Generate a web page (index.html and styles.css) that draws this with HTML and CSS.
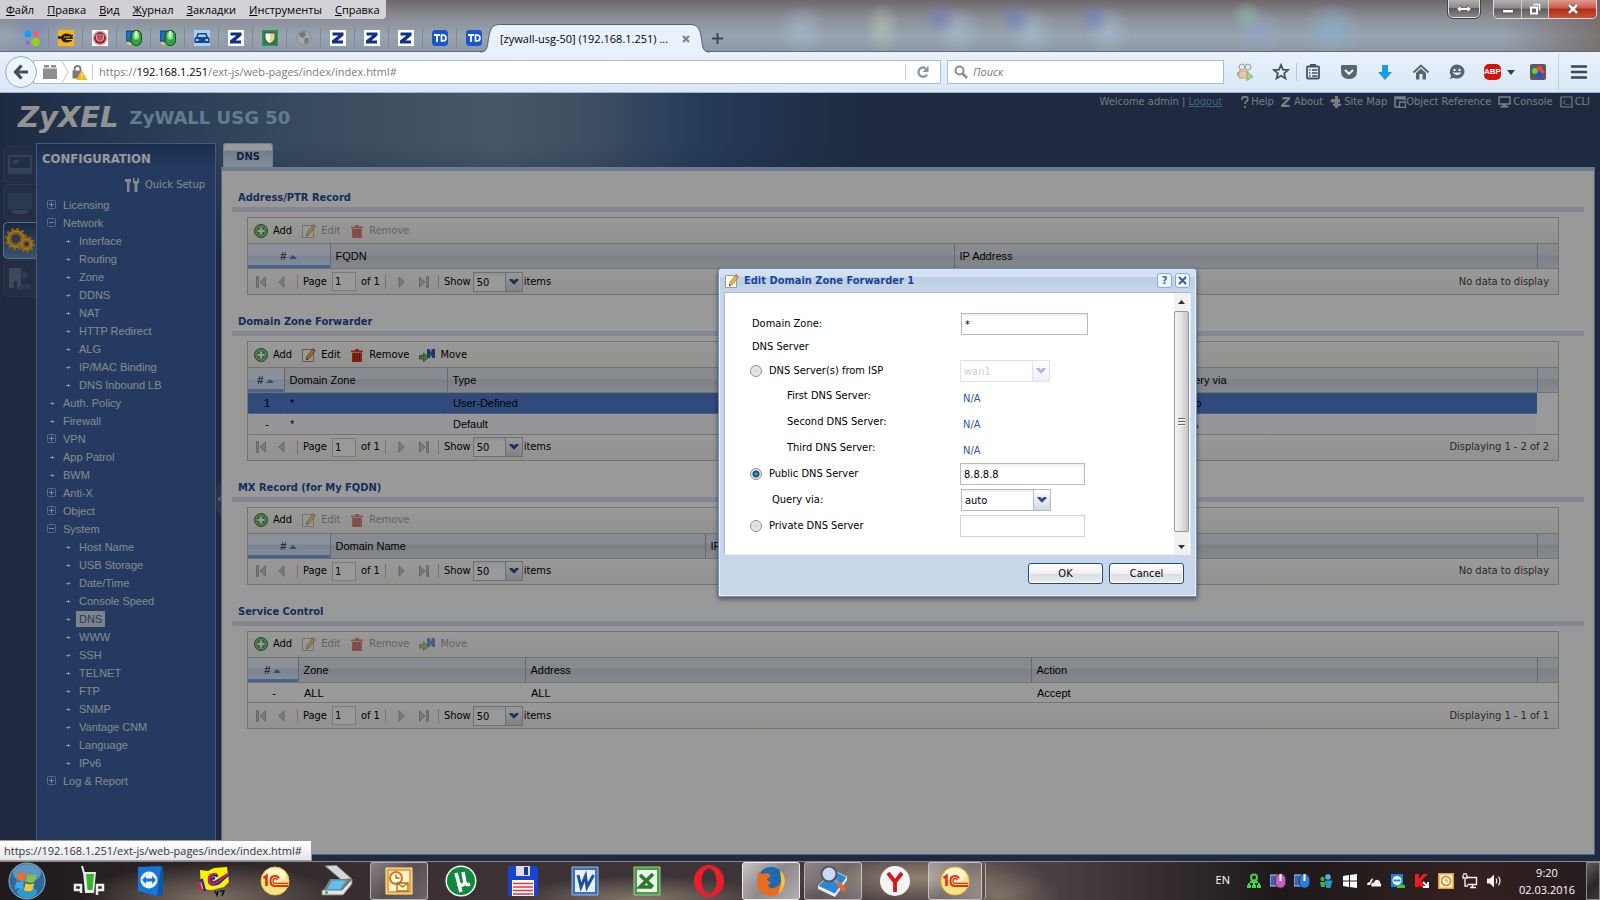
FILE: index.html
```html
<!DOCTYPE html>
<html lang="ru">
<head>
  <meta charset="UTF-8">
  <meta name="viewport" content="width=device-width, initial-scale=1.0">
  <title>[zywall-usg-50] (192.168.1.251)</title>
  <link rel="stylesheet" href="styles.css">
</head>
<body>

<!-- shared icons -->
<svg class="sprite" aria-hidden="true">
  <symbol id="i-add" viewBox="0 0 14 14"><circle cx="7" cy="7" r="6.5" fill="#5cae58" stroke="#3a7d3a"/><circle cx="7" cy="7" r="5.2" fill="none" stroke="#c5e6c0" stroke-width=".8"/><path d="M7 3.5v7M3.5 7h7" stroke="#fff" stroke-width="2.2"/></symbol>
  <symbol id="i-edit" viewBox="0 0 14 14"><path d="M.5 1.5h11v12H.5z" fill="#fff" stroke="#9a9a9a"/><path d="M11 .5l2.500 2-6 8-3.200 1.500.4-3.200z" fill="#f5b93c" stroke="#8f6322" stroke-width=".7"/><path d="M11 .5l2.500 2-1.300 1.600-2.500-2z" fill="#e57a6a"/><path d="M4.300 12l.3-1.700 1.200 1z" fill="#222"/></symbol>
  <symbol id="i-del" viewBox="0 0 14 14"><path d="M1 2.500h12v1.800H1zM5 1h4v1.500H5zM2 4.800h10V14H2z" fill="#d8442c"/><path d="M4.500 5.500v7.500M7 5.500v7.500M9.500 5.500v7.500" stroke="#8f2415"/></symbol>
  <symbol id="i-move" viewBox="0 0 16 14"><path d="M8 1h2.500l2 4V1H16v9h-2.500l-2.200-4v4H8z" fill="#2b62b8"/><path d="M.5 7.500h4V5l5 4.500-5 4v-2.500h-4z" fill="#7cba52" stroke="#37752c" stroke-width=".8"/></symbol>
  <symbol id="i-first" viewBox="0 0 11 12"><path d="M.5.5h2v11h-2zM9.500.8v10.400L4 6z" fill="#c2c2c2" stroke="#8c8c8c" stroke-width=".8"/></symbol>
  <symbol id="i-prev" viewBox="0 0 7 12"><path d="M6 .8v10.400L.8 6z" fill="#c2c2c2" stroke="#8c8c8c" stroke-width=".8"/></symbol>
  <symbol id="i-next" viewBox="0 0 7 12"><path d="M1 .8v10.400L6.200 6z" fill="#c2c2c2" stroke="#8c8c8c" stroke-width=".8"/></symbol>
  <symbol id="i-last" viewBox="0 0 11 12"><path d="M8.500.5h2v11h-2zM1.500.8v10.400L7 6z" fill="#c2c2c2" stroke="#8c8c8c" stroke-width=".8"/></symbol>
  <symbol id="i-chev" viewBox="0 0 10 6"><path d="M.5 0h2.800L5 1.800 6.700 0h2.800v1.200L5 5.800.5 1.200z" fill="#2d4f95"/></symbol>
  <symbol id="i-plus" viewBox="0 0 10 10"><rect x=".5" y=".5" width="8" height="8" rx="1" fill="none" stroke="#93b3d6"/><path d="M4.500 2v5M2 4.500h5" stroke="#d5dfeb"/></symbol>
  <symbol id="i-minus" viewBox="0 0 10 10"><rect x=".5" y=".5" width="8" height="8" rx="1" fill="none" stroke="#93b3d6"/><path d="M2 4.500h5" stroke="#d5dfeb"/></symbol>
  <symbol id="i-dot" viewBox="0 0 5 5"><path d="M0 2.500h4.500M2.500 1v3" stroke="#e3e9f0" stroke-width="1"/></symbol>
  <symbol id="i-z" viewBox="0 0 16 16"><path d="M0 0h16v16H0z" fill="#fff"/><path d="M2.500 2.500h11v3L7.500 10.500H13v3H2v-3l6.500-5h-6z" fill="#10308a"/></symbol>
  <symbol id="i-mouse" viewBox="0 0 16 16"><path d="M0 1h7v10H0z" fill="#1c6fc4" stroke="#1a2c50" stroke-width=".8"/><path d="M1 13l4 1.500" stroke="#ffd24a" stroke-width="1.600"/><rect x="5" y=".5" width="10.500" height="15" rx="5" fill="#2fa63a" stroke="#0d4d18"/><path d="M7.500 2.500v6q2.700 2.600 5.400 0v-6" fill="#8be08c"/><path d="M10.200 1v6" stroke="#fff" stroke-width="2"/></symbol>
  <symbol id="i-td" viewBox="0 0 16 16"><rect width="16" height="16" rx="3.500" fill="#1b56c8"/><path d="M2 5h6M5 5v7" stroke="#fff" stroke-width="1.800"/><path d="M9.500 5v6h1.500q3 0 3-3t-3-3z" fill="none" stroke="#fff" stroke-width="1.700"/></symbol>
  <symbol id="i-1c" viewBox="0 0 30 30"><circle cx="15" cy="15" r="14" fill="#fbe180" stroke="#e8c34e"/><ellipse cx="15" cy="9" rx="11" ry="7" fill="#fff6c8"/><path d="M3.500 12l3-2v10" fill="none" stroke="#e0301a" stroke-width="2.600"/><path d="M19 12.500q-1-2.500-4-2.500-4.500 0-4.500 5t4.500 5h13" fill="none" stroke="#e0301a" stroke-width="2"/><path d="M17.500 14q-.5-1.500-2.500-1.500-2 0-2 2.500t2 2.300h13" fill="none" stroke="#e0301a" stroke-width="1.300"/></symbol>
</svg>

<!-- browser window -->
<header class="titlebar">
  <div class="title-row">
    <nav class="menubar">
      <button type="button"><u>Ф</u>айл</button>
      <button type="button"><u>П</u>равка</button>
      <button type="button"><u>В</u>ид</button>
      <button type="button"><u>Ж</u>урнал</button>
      <button type="button"><u>З</u>акладки</button>
      <button type="button"><u>И</u>нструменты</button>
      <button type="button"><u>С</u>правка</button>
    </nav>
    <div class="win-buttons">
      <button type="button" class="wb wb-span" aria-label="span"><svg width="16" height="10" viewBox="0 0 16 10"><path d="M.7 5l4-4v2.500h6.600V1l4 4-4 4V6.500H4.700V9z" fill="#fff" stroke="#555" stroke-width=".8"/></svg></button>
      <div class="wb-group">
        <button type="button" class="wb wb-min" aria-label="minimize"><svg width="12" height="10"><path d="M.5 5.500h11v3.500H.5z" fill="#fff" stroke="#555"/></svg></button>
        <button type="button" class="wb wb-max" aria-label="restore"><svg width="12" height="12"><path d="M4.500 1.500h6v6" fill="none" stroke="#fff" stroke-width="1.500"/><path d="M2 4.500h6v6H2z" fill="none" stroke="#fff" stroke-width="2"/></svg></button>
        <button type="button" class="wb wb-close" aria-label="close"><svg width="12" height="10"><path d="M2 1l8 8M10 1L2 9" stroke="#6b3a34" stroke-width="4"/><path d="M2 1l8 8M10 1L2 9" stroke="#fff" stroke-width="2.500"/></svg></button>
      </div>
    </div>
  </div>

  <div class="tabs">
    <span class="pin"><svg width="16" height="16"><circle cx="4" cy="4" r="3.500" fill="#00a8f3"/><circle cx="12" cy="4" r="2.800" fill="#ff5b67"/><circle cx="3.500" cy="12.500" r="2" fill="#9b5bdc"/><circle cx="11.500" cy="12" r="4.300" fill="#94d01c"/></svg></span>
    <span class="pin"><svg width="16" height="16"><path d="M0 0h16v16H0z" fill="#f9b418"/><path d="M0 7.500h4" stroke="#222" stroke-width="2.500"/><ellipse cx="8.500" cy="8" rx="5.500" ry="4.500" fill="#222"/><path d="M8 5.500h7M8 8h7M9 10.500h5" stroke="#222" stroke-width="1.300"/><path d="M6 7h6M8 9.500h6" stroke="#f9b418" stroke-width="1"/></svg></span>
    <span class="pin"><svg width="16" height="16"><path d="M0 0h16v16H0z" fill="#fff"/><circle cx="8" cy="8" r="7.500" fill="#b9bcc2"/><circle cx="8" cy="8" r="6" fill="#b71c2b"/><path d="M4 5h8l-1 5q-3 2.500-6 0z" fill="#8c1220" stroke="#ddd" stroke-width=".8"/><path d="M6 6v4M8 6v4.500M10 6v4" stroke="#e6c9cc" stroke-width=".8"/></svg></span>
    <span class="pin"><svg width="16" height="16"><use href="#i-mouse"/></svg></span>
    <span class="pin"><svg width="16" height="16"><use href="#i-mouse"/></svg></span>
    <span class="pin"><svg width="16" height="16"><path d="M0 0h16v16H0z" fill="#a9cff5"/><path d="M3.500 3h9l1.500 4 1.500 1v5h-15V8L2 7z" fill="#15498f"/><path d="M4.700 4.500h6.600l.9 2.500H3.800z" fill="#a9cff5"/><path d="M2 10h2.500M11.500 10H14" stroke="#fff" stroke-width="1.500"/></svg></span>
    <span class="pin"><svg width="16" height="16"><use href="#i-z"/></svg></span>
    <span class="pin"><svg width="16" height="16"><path d="M.8.8h14.400v14.400H.8z" fill="#3a6b55" stroke="#1f9a45" stroke-width="1.600"/><path d="M3.500 3.500H8v9.500q-4.500-2-4.500-6z" fill="#fff"/><path d="M8 3.500h4.500V7q0 4-4.500 6z" fill="#e9d58c"/></svg></span>
    <span class="pin"><svg width="16" height="16"><circle cx="8" cy="8" r="7" fill="#a5a9ae" stroke="#83878c"/><path d="M3 4q3-3 6-2l1 3-3 3-3-1zM9 8h4l-1 5-3 1-1-3z" fill="#74787d"/></svg></span>
    <span class="pin"><svg width="16" height="16"><use href="#i-z"/></svg></span>
    <span class="pin"><svg width="16" height="16"><use href="#i-z"/></svg></span>
    <span class="pin"><svg width="16" height="16"><use href="#i-z"/></svg></span>
    <span class="pin"><svg width="16" height="16"><use href="#i-td"/></svg></span>
    <span class="pin"><svg width="16" height="16"><use href="#i-td"/></svg></span>
    <div class="tab-active">
      <svg width="20" height="29"><path d="M0 28.500C9 28.500 7 20 9 12 10.500 4 13 .5 20 .5V29H0z" fill="#e9f1fb"/><path d="M0 28C9 28 7 20 9 12 10.500 4 13 .5 20 .5" fill="none" stroke="#566073"/></svg>
      <div class="tab-mid">
        <span>[zywall-usg-50] (192.168.1.251) ...</span>
        <button type="button" aria-label="close tab"><svg width="8" height="8"><path d="M1 1l6 6M7 1L1 7" stroke="#7b8794" stroke-width="2.200"/></svg></button>
      </div>
      <svg width="20" height="29"><path d="M20 28.500C11 28.500 13 20 11 12 9.500 4 7 .5 0 .5V29H20z" fill="#e9f1fb"/><path d="M20 28C11 28 13 20 11 12 9.500 4 7 .5 0 .5" fill="none" stroke="#566073"/></svg>
    </div>
    <button type="button" class="tab-new" aria-label="new tab"><svg width="11" height="11"><path d="M5.500 0v11M0 5.500h11" stroke="#404b57" stroke-width="2"/></svg></button>
  </div>
</header>

<div class="navbar">
  <button type="button" class="back" aria-label="back"><svg width="16" height="16"><path d="M8.500 1.500L2.500 8l6 6.500M3 8h12" fill="none" stroke="#40505f" stroke-width="3.200"/></svg></button>
  <div class="urlbox">
    <svg width="16" height="14"><path d="M1 3.500h14V14H1zM2 0h5v2.500H2zM9 0h5v2.500H9z" fill="#8d8d8d"/></svg>
    <svg width="8" height="22"><path d="M1 0l6 11-6 11" fill="none" stroke="#c5c5c5"/></svg>
    <svg width="16" height="15"><path d="M2.500 6V4q0-3 3-3t3 3v2" fill="none" stroke="#7b7b7b" stroke-width="1.800"/><rect x=".5" y="5.500" width="9.500" height="8" fill="#7b7b7b"/><path d="M9.500 5L15.500 15H4z" fill="#fbb415"/><path d="M9.700 8v3.500M9.700 12.500v1.300" stroke="#fff" stroke-width="1.300"/></svg>
    <span class="vline"></span>
    <div class="url">https://<b>192.168.1.251</b>/ext-js/web-pages/index/index.html#</div>
    <span class="vline"></span>
    <button type="button" class="reload" aria-label="reload"><svg width="14" height="14"><path d="M11 9.500A4.600 4.600 0 1 1 9.500 3.200" fill="none" stroke="#8796a5" stroke-width="2.300"/><path d="M12.500.5v6.500H6.500z" fill="#8796a5"/></svg></button>
  </div>
  <label class="searchbox">
    <svg width="14" height="14"><circle cx="5.500" cy="5.500" r="4" fill="none" stroke="#8b8b8b" stroke-width="2"/><path d="M8.500 8.500l4.500 4.500" stroke="#8b8b8b" stroke-width="2.500"/></svg>
    <input type="text" placeholder="Поиск" aria-label="Поиск">
  </label>
  <div class="nav-icons">
    <button type="button" aria-label="video"><svg width="18" height="18"><circle cx="6" cy="4" r="3" fill="#e3e7ea" stroke="#98a1a8"/><circle cx="12" cy="4" r="3" fill="#e3e7ea" stroke="#98a1a8"/><path d="M3 8h9v7H3z" fill="#ecc79a" stroke="#b5a48e"/><path d="M1 9h2v4H1z" fill="#a3a9ae"/><path d="M11 9l6 4.500-6 4z" fill="#9ad79a" stroke="#78b878"/></svg></button>
    <button type="button" aria-label="bookmark" class="star"><svg width="18" height="18"><path d="M9 2l2 4.700 5 .4-3.800 3.300 1.200 5L9 12.800l-4.400 2.600 1.200-5L2 7.100l5-.4z" fill="none" stroke="#47525f" stroke-width="1.800"/></svg></button>
    <button type="button" aria-label="list"><svg width="18" height="18"><rect x="3" y="3.500" width="12" height="12" rx="1" fill="none" stroke="#47525f" stroke-width="1.800"/><path d="M6 1h6v3H6z" fill="#47525f"/><path d="M5 7h1.500M8 7h5.500M5 10h1.500M8 10h5.500M5 13h1.500M8 13h5.500" stroke="#47525f" stroke-width="1.500"/></svg></button>
    <button type="button" aria-label="pocket"><svg width="18" height="18"><path d="M2 2h14l1 1v5q0 8-8 8T1 8V3z" fill="#5a6470"/><path d="M5 7l4 3.800L13 7" fill="none" stroke="#eef4fb" stroke-width="2"/></svg></button>
    <button type="button" aria-label="downloads"><svg width="18" height="18"><path d="M6 2h6v7h4l-7 8-7-8h4z" fill="#1d9be0"/></svg></button>
    <button type="button" aria-label="home"><svg width="18" height="18"><path d="M1.500 9.500L9 2.500l7.500 7" fill="none" stroke="#5a6470" stroke-width="2"/><path d="M4 10l5-4.500L14 10v6.500h-3.500V11h-3v5.500H4z" fill="#5a6470"/></svg></button>
    <button type="button" aria-label="chat"><svg width="18" height="18"><path d="M9 1.500a7.500 7 0 1 1-3.500 13.200L1.500 16l1.700-3A7.300 7.300 0 0 1 9 1.500z" fill="#5a6470"/><circle cx="6.500" cy="7" r="1.200" fill="#eef4fb"/><circle cx="11.500" cy="7" r="1.200" fill="#eef4fb"/><path d="M4.500 9.500q4.500 5 9 0z" fill="#eef4fb"/></svg></button>
    <button type="button" class="abp">
      <span>ABP</span>
      <svg width="8" height="5"><path d="M0 0h8L4 5z" fill="#333c47"/></svg>
    </button>
    <button type="button" aria-label="addon"><svg width="18" height="18"><rect x="1" y="1" width="16" height="16" rx="2" fill="#5b5b5b"/><circle cx="6" cy="8" r="3" fill="#5ad53f"/><circle cx="10.500" cy="5" r="2.600" fill="#f2413f"/><circle cx="13" cy="8.500" r="2.300" fill="#e84848"/><circle cx="10.500" cy="12" r="3" fill="#2b48f0"/></svg></button>
    <span class="vline tall"></span>
    <button type="button" aria-label="menu"><svg width="18" height="18"><path d="M2 3.500h14M2 9h14M2 14.500h14" stroke="#3c4754" stroke-width="2.600" stroke-linecap="round"/></svg></button>
  </div>
</div>

<!-- router web interface -->
<main class="app">
  <div class="app-head">
    <div class="logo">ZyXEL</div>
    <div class="model">ZyWALL USG 50</div>
    <div class="links">
      <span>Welcome admin | <a href="#" class="logout">Logout</a></span>
      <a href="#"><svg width="8" height="12"><path d="M1.200 4V2q0-1 1.200-1h3q1.200 0 1.200 1v2q0 1-1.300 1.500Q4 6 4 8M4 10v2" fill="none" stroke="#cfd2d8" stroke-width="1.800"/></svg>Help</a>
      <a href="#"><svg width="9" height="10" class="gap"><path d="M1.500 1.200h7L1 8.800h7.500" fill="none" stroke="#cfd2d8" stroke-width="2.200"/></svg>About</a>
      <a href="#"><svg width="12" height="12"><path d="M5 0h3v12H5zM0 5l2-2h8v3.500H2zM3 7.500h7l1.500 1.300L10 10H3z" fill="#cfd2d8"/></svg>Site Map</a>
      <a href="#" class="tight"><svg width="12" height="12"><path d="M1 11.500V1h10v3.500M1 11h4" fill="none" stroke="#cfd2d8" stroke-width="1.600"/><path d="M5.500 6h6v5.500h-6z" fill="none" stroke="#cfd2d8" stroke-width="1.400"/><path d="M1 1h10v2.500H1z" fill="#cfd2d8"/></svg>Object Reference</a>
      <a href="#"><svg width="13" height="12"><path d="M1 1h11v7H1z" fill="none" stroke="#cfd2d8" stroke-width="1.500"/><path d="M4.500 8h4v2h2v1.500H2.500V10h2z" fill="#cfd2d8"/></svg>Console</a>
      <a href="#"><svg width="13" height="12"><path d="M1 1h11v10H1z" fill="none" stroke="#cfd2d8" stroke-width="1.200"/><path d="M5.500 4.500L3.500 6.500l2 2M6.500 8.500h1M8.500 8.500h1" fill="none" stroke="#cfd2d8"/></svg>CLI</a>
    </div>
  </div>

  <div class="app-main">
    <div class="rail">
      <div class="rail-item"><svg width="26" height="26"><path d="M1 3h24v19H1z" fill="#5a6d90"/><path d="M3 5h20v11H3z" fill="#384d77"/><path d="M6 8h7l-3 4H6z" fill="#5a6d90"/></svg></div>
      <div class="rail-item"><svg width="26" height="26"><path d="M1 3h24v16H1z" fill="#4a5f87"/><path d="M4 20h18l-3 4H7z" fill="#5a6d90"/></svg></div>
      <div class="rail-item on">
        <svg width="30" height="28">
          <g fill="none" stroke="#e9a21e"><circle cx="11" cy="12" r="7" stroke-width="4.500"/><circle cx="11" cy="12" r="10" stroke-width="2.500" stroke-dasharray="2.600 2.640"/></g>
          <circle cx="11" cy="12" r="8" fill="none" stroke="#ffdf73" stroke-width="1"/>
          <g fill="none" stroke="#e9a21e"><circle cx="21.500" cy="17" r="4.500" stroke-width="4.500" fill="#3b5680"/><circle cx="21.500" cy="17" r="7.300" stroke-width="2" stroke-dasharray="2.300 2.290"/></g>
          <circle cx="21.500" cy="17" r="5" fill="none" stroke="#ffdf73"/>
        </svg>
      </div>
      <div class="rail-item"><svg width="26" height="26"><path d="M2 2h12v20h-4v-7H7v7H2z" fill="#66789a"/><circle cx="17" cy="9" r="4" fill="#4d628a"/><path d="M10 24q4-10 14-5v4z" fill="#4d628a"/></svg></div>
    </div>

    <aside class="sidebar">
      <h1>CONFIGURATION</h1>
      <a href="#" class="quick">
        <svg width="15" height="14"><path d="M0 1h6v3H4.500V14h-2.500V4H0z" fill="#dfe4ea"/><path d="M8 0v4q0 1.500 1.500 2V14h3V6Q14 5.500 14 4V0l-1.500 0v3h-3V0z" fill="#dfe4ea"/></svg>
        Quick Setup
      </a>
      <ul class="tree">
        <li><svg><use href="#i-plus"/></svg><a href="#">Licensing</a></li>
        <li><svg><use href="#i-minus"/></svg><a href="#">Network</a></li>
        <li class="sub"><svg><use href="#i-dot"/></svg><a href="#">Interface</a></li>
        <li class="sub"><svg><use href="#i-dot"/></svg><a href="#">Routing</a></li>
        <li class="sub"><svg><use href="#i-dot"/></svg><a href="#">Zone</a></li>
        <li class="sub"><svg><use href="#i-dot"/></svg><a href="#">DDNS</a></li>
        <li class="sub"><svg><use href="#i-dot"/></svg><a href="#">NAT</a></li>
        <li class="sub"><svg><use href="#i-dot"/></svg><a href="#">HTTP Redirect</a></li>
        <li class="sub"><svg><use href="#i-dot"/></svg><a href="#">ALG</a></li>
        <li class="sub"><svg><use href="#i-dot"/></svg><a href="#">IP/MAC Binding</a></li>
        <li class="sub"><svg><use href="#i-dot"/></svg><a href="#">DNS Inbound LB</a></li>
        <li class="leaf"><svg><use href="#i-dot"/></svg><a href="#">Auth. Policy</a></li>
        <li class="leaf"><svg><use href="#i-dot"/></svg><a href="#">Firewall</a></li>
        <li><svg><use href="#i-plus"/></svg><a href="#">VPN</a></li>
        <li class="leaf"><svg><use href="#i-dot"/></svg><a href="#">App Patrol</a></li>
        <li class="leaf"><svg><use href="#i-dot"/></svg><a href="#">BWM</a></li>
        <li><svg><use href="#i-plus"/></svg><a href="#">Anti-X</a></li>
        <li><svg><use href="#i-plus"/></svg><a href="#">Object</a></li>
        <li><svg><use href="#i-minus"/></svg><a href="#">System</a></li>
        <li class="sub"><svg><use href="#i-dot"/></svg><a href="#">Host Name</a></li>
        <li class="sub"><svg><use href="#i-dot"/></svg><a href="#">USB Storage</a></li>
        <li class="sub"><svg><use href="#i-dot"/></svg><a href="#">Date/Time</a></li>
        <li class="sub"><svg><use href="#i-dot"/></svg><a href="#">Console Speed</a></li>
        <li class="sub"><svg><use href="#i-dot"/></svg><a href="#" class="current">DNS</a></li>
        <li class="sub"><svg><use href="#i-dot"/></svg><a href="#">WWW</a></li>
        <li class="sub"><svg><use href="#i-dot"/></svg><a href="#">SSH</a></li>
        <li class="sub"><svg><use href="#i-dot"/></svg><a href="#">TELNET</a></li>
        <li class="sub"><svg><use href="#i-dot"/></svg><a href="#">FTP</a></li>
        <li class="sub"><svg><use href="#i-dot"/></svg><a href="#">SNMP</a></li>
        <li class="sub"><svg><use href="#i-dot"/></svg><a href="#">Vantage CNM</a></li>
        <li class="sub"><svg><use href="#i-dot"/></svg><a href="#">Language</a></li>
        <li class="sub"><svg><use href="#i-dot"/></svg><a href="#">IPv6</a></li>
        <li><svg><use href="#i-plus"/></svg><a href="#">Log &amp; Report</a></li>
      </ul>
    </aside>

    <div class="splitter"><svg width="5" height="34"><path d="M5 0v34L0 28V6z" fill="#46577b"/><path d="M4.500 14v6L1.500 17z" fill="#93a3c0"/></svg></div>

    <section class="content">
      <a href="#" class="page-tab">DNS</a>
      <div class="panel">

        <section class="block">
          <h2>Address/PTR Record</h2>
          <div class="grid">
            <div class="toolbar">
              <button type="button"><svg><use href="#i-add"/></svg>Add</button>
              <button type="button" disabled><svg><use href="#i-edit"/></svg>Edit</button>
              <button type="button" disabled><svg><use href="#i-del"/></svg>Remove</button>
            </div>
            <table>
              <colgroup><col class="w-num-l"><col class="w-fqdn"><col><col class="w-end"></colgroup>
              <tr><th class="sorted"># <i></i></th><th>FQDN</th><th>IP Address</th><th></th></tr>
            </table>
            <div class="pager">
              <button type="button" class="p-first" aria-label="first"><svg width="11" height="12"><use href="#i-first"/></svg></button>
              <button type="button" class="p-prev" aria-label="prev"><svg width="7" height="12"><use href="#i-prev"/></svg></button>
              <span class="sep"></span>
              <label>Page <input type="text" value="1"></label>
              <span class="of">of 1</span>
              <span class="sep"></span>
              <button type="button" class="p-next" aria-label="next"><svg width="7" height="12"><use href="#i-next"/></svg></button>
              <button type="button" class="p-last" aria-label="last"><svg width="11" height="12"><use href="#i-last"/></svg></button>
              <span class="sep"></span>
              <label for="show1">Show</label>
              <span class="combo small"><select id="show1"><option>50</option></select><span class="arrow"><svg width="10" height="6"><use href="#i-chev"/></svg></span></span>
              <span>items</span>
              <span class="total">No data to display</span>
            </div>
          </div>
        </section>

        <section class="block">
          <h2>Domain Zone Forwarder</h2>
          <div class="grid">
            <div class="toolbar">
              <button type="button"><svg><use href="#i-add"/></svg>Add</button>
              <button type="button"><svg><use href="#i-edit"/></svg>Edit</button>
              <button type="button"><svg><use href="#i-del"/></svg>Remove</button>
              <button type="button"><svg class="mv"><use href="#i-move"/></svg>Move</button>
            </div>
            <table>
              <colgroup><col class="w-num-s"><col class="w-zone"><col class="w-type"><col><col class="w-end"></colgroup>
              <tr><th class="sorted"># <i></i></th><th>Domain Zone</th><th>Type</th><th>Query via</th><th></th></tr>
              <tr class="selected"><td class="num">1</td><td>*</td><td>User-Defined</td><td>auto</td><td class="blank"></td></tr>
              <tr class="alt"><td class="num">-</td><td>*</td><td>Default</td><td>N/A</td><td class="blank"></td></tr>
            </table>
            <div class="pager">
              <button type="button" class="p-first" aria-label="first"><svg width="11" height="12"><use href="#i-first"/></svg></button>
              <button type="button" class="p-prev" aria-label="prev"><svg width="7" height="12"><use href="#i-prev"/></svg></button>
              <span class="sep"></span>
              <label>Page <input type="text" value="1"></label>
              <span class="of">of 1</span>
              <span class="sep"></span>
              <button type="button" class="p-next" aria-label="next"><svg width="7" height="12"><use href="#i-next"/></svg></button>
              <button type="button" class="p-last" aria-label="last"><svg width="11" height="12"><use href="#i-last"/></svg></button>
              <span class="sep"></span>
              <label for="show2">Show</label>
              <span class="combo small"><select id="show2"><option>50</option></select><span class="arrow"><svg width="10" height="6"><use href="#i-chev"/></svg></span></span>
              <span>items</span>
              <span class="total">Displaying 1 - 2 of 2</span>
            </div>
          </div>
        </section>

        <section class="block">
          <h2>MX Record (for My FQDN)</h2>
          <div class="grid">
            <div class="toolbar">
              <button type="button"><svg><use href="#i-add"/></svg>Add</button>
              <button type="button" disabled><svg><use href="#i-edit"/></svg>Edit</button>
              <button type="button" disabled><svg><use href="#i-del"/></svg>Remove</button>
            </div>
            <table>
              <colgroup><col class="w-num-l"><col class="w-name"><col><col class="w-end"></colgroup>
              <tr><th class="sorted"># <i></i></th><th>Domain Name</th><th>IP/FQDN</th><th></th></tr>
            </table>
            <div class="pager">
              <button type="button" class="p-first" aria-label="first"><svg width="11" height="12"><use href="#i-first"/></svg></button>
              <button type="button" class="p-prev" aria-label="prev"><svg width="7" height="12"><use href="#i-prev"/></svg></button>
              <span class="sep"></span>
              <label>Page <input type="text" value="1"></label>
              <span class="of">of 1</span>
              <span class="sep"></span>
              <button type="button" class="p-next" aria-label="next"><svg width="7" height="12"><use href="#i-next"/></svg></button>
              <button type="button" class="p-last" aria-label="last"><svg width="11" height="12"><use href="#i-last"/></svg></button>
              <span class="sep"></span>
              <label for="show3">Show</label>
              <span class="combo small"><select id="show3"><option>50</option></select><span class="arrow"><svg width="10" height="6"><use href="#i-chev"/></svg></span></span>
              <span>items</span>
              <span class="total">No data to display</span>
            </div>
          </div>
        </section>

        <section class="block">
          <h2>Service Control</h2>
          <div class="grid">
            <div class="toolbar">
              <button type="button"><svg><use href="#i-add"/></svg>Add</button>
              <button type="button" disabled><svg><use href="#i-edit"/></svg>Edit</button>
              <button type="button" disabled><svg><use href="#i-del"/></svg>Remove</button>
              <button type="button" disabled><svg class="mv"><use href="#i-move"/></svg>Move</button>
            </div>
            <table>
              <colgroup><col class="w-num-m"><col class="w-svc"><col class="w-addr"><col><col class="w-end"></colgroup>
              <tr><th class="sorted"># <i></i></th><th>Zone</th><th>Address</th><th>Action</th><th></th></tr>
              <tr><td class="num">-</td><td>ALL</td><td>ALL</td><td>Accept</td><td class="blank"></td></tr>
            </table>
            <div class="pager">
              <button type="button" class="p-first" aria-label="first"><svg width="11" height="12"><use href="#i-first"/></svg></button>
              <button type="button" class="p-prev" aria-label="prev"><svg width="7" height="12"><use href="#i-prev"/></svg></button>
              <span class="sep"></span>
              <label>Page <input type="text" value="1"></label>
              <span class="of">of 1</span>
              <span class="sep"></span>
              <button type="button" class="p-next" aria-label="next"><svg width="7" height="12"><use href="#i-next"/></svg></button>
              <button type="button" class="p-last" aria-label="last"><svg width="11" height="12"><use href="#i-last"/></svg></button>
              <span class="sep"></span>
              <label for="show4">Show</label>
              <span class="combo small"><select id="show4"><option>50</option></select><span class="arrow"><svg width="10" height="6"><use href="#i-chev"/></svg></span></span>
              <span>items</span>
              <span class="total">Displaying 1 - 1 of 1</span>
            </div>
          </div>
        </section>

      </div>
    </section>
  </div>

  <div class="mask"></div>

  <!-- edit window -->
  <div class="dialog" role="dialog" aria-labelledby="dlgTitle">
    <div class="dlg-head">
      <svg width="14" height="14"><use href="#i-edit"/></svg>
      <h3 id="dlgTitle">Edit Domain Zone Forwarder 1</h3>
      <button type="button" class="dlg-tool" aria-label="help">?</button>
      <button type="button" class="dlg-tool" aria-label="close"><svg width="9" height="9"><path d="M1 1l7 7M8 1L1 8" stroke="#2c56a8" stroke-width="1.800"/></svg></button>
    </div>
    <div class="dlg-body">
      <form class="form">
        <div class="row first"><label for="zone">Domain Zone:</label><input type="text" id="zone" class="text wide" value="*"></div>
        <div class="row short"><span>DNS Server</span></div>
        <div class="row isp radio"><label><input type="radio" name="srv">DNS Server(s) from ISP</label><span class="combo off"><select disabled aria-label="ISP interface"><option>wan1</option></select><span class="arrow"><svg width="10" height="6"><use href="#i-chev"/></svg></span></span></div>
        <div class="row deep"><span>First DNS Server:</span><span class="val">N/A</span></div>
        <div class="row deep"><span>Second DNS Server:</span><span class="val">N/A</span></div>
        <div class="row deep"><span>Third DNS Server:</span><span class="val">N/A</span></div>
        <div class="row radio"><label><input type="radio" name="srv" checked>Public DNS Server</label><input type="text" class="text" value="8.8.8.8" aria-label="Public DNS Server"></div>
        <div class="row mid"><label for="via">Query via:</label><span class="combo"><select id="via"><option>auto</option></select><span class="arrow"><svg width="10" height="6"><use href="#i-chev"/></svg></span></span></div>
        <div class="row radio"><label><input type="radio" name="srv">Private DNS Server</label><input type="text" class="text" disabled aria-label="Private DNS Server"></div>
      </form>
      <div class="scroll">
        <svg width="7" height="4"><path d="M0 4l3.500-4L7 4z" fill="#333"/></svg>
        <div class="thumb"><i></i><i></i><i></i></div>
        <svg width="7" height="4"><path d="M0 0l3.500 4L7 0z" fill="#333"/></svg>
      </div>
    </div>
    <div class="dlg-foot">
      <button type="button">OK</button>
      <button type="button">Cancel</button>
    </div>
  </div>

  <div class="status">https://192.168.1.251/ext-js/web-pages/index/index.html#</div>
</main>

<!-- taskbar -->
<footer class="taskbar">
  <button type="button" class="start" aria-label="start"><svg width="38" height="38"><circle cx="19" cy="19" r="18" fill="#2c6a9c" stroke="#8fb9d6"/><ellipse cx="19" cy="11" rx="14" ry="9" fill="#7fb4d8" opacity=".6"/><ellipse cx="19" cy="30" rx="10" ry="6" fill="#35b8ee" opacity=".6"/><path d="M10 12q4-2.500 8-.5l-1.500 7.500q-3.500-2-8 0z" fill="#ef6a2d"/><path d="M19.500 12q4 2.500 9 0l-1.700 7.500q-4 2.500-8.800 0z" fill="#8ac43f"/><path d="M8 20.500q4-2.500 8-.3L14.500 27q-3.500-2-8 .5z" fill="#45a5e6"/><path d="M17.500 21q4 2.500 8.800 0L24.500 28q-4 2.500-8.500.3z" fill="#fbc52b"/></svg></button>
  <button type="button" class="task" aria-label="qip"><svg width="32" height="32"><path d="M9 1l2 7" stroke="#eee" stroke-width="2"/><path d="M10 7h13l-2 21h-9z" fill="#e9e9e9"/><path d="M13 9h8l-1.500 16h-5z" fill="#35b52c"/><path d="M8 28v-8H2v5h6M24 30V20h6v5h-6" fill="none" stroke="#eee" stroke-width="2.500"/></svg></button>
  <button type="button" class="task" aria-label="teamviewer"><svg width="32" height="32"><path d="M3 2l23-1v26l-4 4-19-5z" fill="#1477d8"/><path d="M26 1l2 2v27l-6 1" fill="#0d57a8"/><circle cx="14" cy="15" r="8.500" fill="#e9f4ff"/><path d="M7 15l4-4v2.500h6V11l4 4-4 4v-2.500h-6V19z" fill="#1477d8"/></svg></button>
  <button type="button" class="task" aria-label="1c7"><svg width="34" height="32"><path d="M4 5l8 1 6-3 13-1 2 15-5 5-12 3-11-1z" fill="#fff200"/><path d="M2 17l4-2 3 11M22 11q-9-3-9 4t10 3l11-10M19 13q-4 0-4 3t6 0l13-8" fill="none" stroke="#1926c9" stroke-width="2.500"/><path d="M1 18l2-1 3 9M21 9q-9-1-8 6t10 1l10-8" fill="none" stroke="#e5202a" stroke-width="2"/><path d="M19 26l2 4 1-4M24 26h4l-2 5" fill="none" stroke="#111" stroke-width="1.500"/></svg></button>
  <button type="button" class="task" aria-label="1c"><svg width="30" height="30"><use href="#i-1c"/></svg></button>
  <button type="button" class="task" aria-label="scanner"><svg width="34" height="32"><path d="M5 1l11-1 16 14-8 3z" fill="#d5d8db" stroke="#777"/><path d="M10 14h15l6-1-9 13H3z" fill="#7b7f84"/><path d="M12 15.500h14l-6 9H7z" fill="#58c4f3"/><path d="M2 25h20l10-11v5l-9 11H2z" fill="#e2e5e7" stroke="#777"/><path d="M5 27.500h3" stroke="#3c9c3c" stroke-width="2"/></svg></button>
  <button type="button" class="task open" aria-label="outlook"><svg width="28" height="30"><path d="M1 2h26v26H1z" fill="#f2a434" stroke="#fff0c9"/><path d="M4 5h20v20H4z" fill="#fff3d6"/><circle cx="11" cy="12" r="6" fill="#fff8e5" stroke="#c97c19" stroke-width="2"/><path d="M11 8.500V12h3.500M12 17h11v8H12zM12 17l5.500 4 5.500-4" fill="none" stroke="#b56d16" stroke-width="1.400"/></svg></button>
  <button type="button" class="task" aria-label="utorrent"><svg width="32" height="32"><circle cx="16" cy="16" r="15.500" fill="#fff"/><circle cx="16" cy="16" r="14" fill="#10893e"/><path d="M11 8l3 11q3 3 6-1L18 7M20 17q1 4 5 2" fill="none" stroke="#fff" stroke-width="3.500"/><path d="M13.500 18l2.500 9" stroke="#fff" stroke-width="3.500"/></svg></button>
  <button type="button" class="task" aria-label="floppy"><svg width="32" height="32"><path d="M1 1h28l2 2v28H1z" fill="#1745cf"/><path d="M9 1h14v10H9z" fill="#dadfe6"/><path d="M17 2h4v8h-4z" fill="#1a3788"/><path d="M5 15h22v16H5z" fill="#fff"/><path d="M6 18.500h20M6 22h20M6 25.500h20M6 29h20" stroke="#e03444" stroke-width="1.300"/></svg></button>
  <button type="button" class="task" aria-label="word"><svg width="28" height="30"><path d="M1 1h26v28H1z" fill="#3c70bd" stroke="#9bb9e3"/><path d="M4 4h20v22H4z" fill="#e8f0fa"/><path d="M7 9l3 12 4.500-11 1.500 11L22.500 9" fill="none" stroke="#1f4f9f" stroke-width="3"/></svg></button>
  <button type="button" class="task" aria-label="excel"><svg width="28" height="30"><path d="M1 1h26v28H1z" fill="#4b9a45" stroke="#9acb90"/><path d="M4 4h20v22H4z" fill="#edf6ea"/><path d="M7 9l13 12M20 8L7 21h12" fill="none" stroke="#2d7a2b" stroke-width="3.500"/></svg></button>
  <button type="button" class="task" aria-label="opera"><svg width="32" height="32"><path fill-rule="evenodd" d="M16 0a15 16 0 1 0 0 32 15 16 0 1 0 0-32zM16 3.500a7.500 12.500 0 1 1 0 25 7.500 12.500 0 1 1 0-25z" fill="#ea1f29"/></svg></button>
  <button type="button" class="task focus" aria-label="firefox"><svg width="32" height="32"><circle cx="16" cy="15.500" r="13.500" fill="#1c6bb0"/><path d="M25 5q7 7 4 16-4 10-14 10-9-1-12-8-2-8 1-17l3 3q3-1 6-1l3 3-4 3q1 3 4 3l-3 4q2 3 6 2 6-2 7-7 1-6-1-11z" fill="#ea6b1e"/><path d="M25 5q7 7 4 16-2 5-6 8 4-9 3-15z" fill="#fbc236"/></svg></button>
  <button type="button" class="task open" aria-label="search"><svg width="34" height="32"><path d="M2 21L18 6l13 6-12 17z" fill="#2b87cf" stroke="#b7dcf4"/><path d="M2 21l17 8 12-17v3L19 32 2 24z" fill="#e6eef4"/><circle cx="13" cy="9" r="7.500" fill="#c9d9f3" stroke="#556" stroke-width="2"/><path d="M19 15l3 3" stroke="#99a" stroke-width="3"/><path d="M22 18l7 8" stroke="#e26a2c" stroke-width="4.500"/></svg></button>
  <button type="button" class="task" aria-label="yandex"><svg width="30" height="30"><circle cx="15" cy="15" r="15" fill="#f4f4f4"/><path d="M8 7l7 9v10M22 7l-7 9" fill="none" stroke="#d61516" stroke-width="3.800"/></svg></button>
  <button type="button" class="task open stack" aria-label="1c open"><svg width="30" height="30"><use href="#i-1c"/></svg></button>

  <div class="tray">
    <span class="lang">EN</span>
    <svg width="16" height="16"><path d="M8 1.500a3 3 0 1 1 0 6 3 3 0 0 1 0-6M4 9h8M3 14v-4M13 14v-4M8 8v6" fill="none" stroke="#41d64b" stroke-width="2"/><path d="M1 12h4v3H1zM6 12h4v3H6zM11 12h4v3h-4z" fill="#41d64b"/></svg>
    <svg width="16" height="16"><path d="M0 2h8v11H0z" fill="#3c63a8" stroke="#bcd"/><rect x="5.500" y="1" width="10" height="14" rx="5" fill="#c75fb8" stroke="#6b2468"/><path d="M10.500 1v7" stroke="#fff" stroke-width="2"/></svg>
    <svg width="16" height="16"><path d="M0 2h8v11H0z" fill="#3c63a8" stroke="#bcd"/><rect x="5.500" y="1" width="10" height="14" rx="5" fill="#2f7fd8" stroke="#123a80"/><path d="M10.500 1v7" stroke="#fff" stroke-width="2"/></svg>
    <svg width="16" height="16"><circle cx="4.500" cy="6" r="2.200" fill="#3eae49"/><path d="M2 9h5v5H3z" fill="#3eae49"/><circle cx="10" cy="4" r="2.800" fill="#4bb5dc"/><path d="M6.500 7.500h8L12.500 15h-4z" fill="#2d94c4"/></svg>
    <svg width="16" height="16"><path d="M1 3l6-1v5.500H1zM8 2l7-1v6.500H8zM1 8.500h6V14l-6-1zM8 8.500h7V15l-7-1z" fill="#fff"/></svg>
    <svg width="16" height="16"><path d="M1 12q0-3 3-3 0-3.500 3.500-3.500L4 12zM5.500 13.500q-1-4 2.500-4 1-4 5-2 1.500 1 1.200 2.500Q16 11 15 13.500z" fill="#f2f2f2"/></svg>
    <svg width="16" height="16"><path d="M1 1h12v13H1z" fill="#1684e0"/><circle cx="7" cy="7.500" r="4.500" fill="#fff"/><path d="M3.500 7.500h7" stroke="#1684e0" stroke-width="2"/><path d="M7 12h8v3H7z" fill="#45c32d"/></svg>
    <svg width="16" height="16"><path d="M1 1h4v5l4-5h5L7 8l4 6H7L5 11v3H1z" fill="#ee1c25"/><path d="M9 9l5 5M14 9v5H9" stroke="#fff" stroke-width="1.800" fill="none"/></svg>
    <svg width="16" height="16"><path d="M.8.800h14.400v14.400H.8z" fill="#fff2d5" stroke="#ef9d2e" stroke-width="1.600"/><circle cx="8" cy="8" r="4.500" fill="none" stroke="#cf8120" stroke-width="1.500"/><path d="M8 5.500V8h2" fill="none" stroke="#cf8120"/></svg>
    <svg width="16" height="16"><path d="M5.500 4.500h9v7h-9M8 14.500h6M10.500 12v2M3 6v7h3M1 2v3h4V2M2 0v2M4 0v2" fill="none" stroke="#f2f2f2" stroke-width="1.400"/></svg>
    <svg width="16" height="16"><path d="M1 5.500h3l4-4v13l-4-4H1z" fill="#f2f2f2"/><path d="M10 5.500q1.500 2.500 0 5M12.500 3.500q3 4.500 0 9" fill="none" stroke="#f2f2f2" stroke-width="1.200"/></svg>
    <div class="clock"><span>9:20</span><span>02.03.2016</span></div>
    <button type="button" class="show-desktop" aria-label="desktop"></button>
  </div>
</footer>

</body>
</html>
```

FILE: styles.css
```css
* { box-sizing: border-box; }
body {
  margin: 0;
  min-height: 100vh;
  display: flex;
  flex-direction: column;
  font: 11px/14px "DejaVu Sans Condensed", Tahoma, sans-serif;
  color: #000;
  overflow: hidden;
}
button { font: inherit; color: inherit; padding: 0; margin: 0; border: 0; background: none; }
input, select { font: inherit; color: inherit; margin: 0; border-radius: 0; }
svg { display: block; flex: none; }
a { color: inherit; text-decoration: none; }
.sprite { position: absolute; width: 0; height: 0; }

/* ---- browser ---- */
.titlebar, .navbar, .status { font: 11px/16px "Open Sans", "Noto Sans", sans-serif; }
.titlebar {
  height: 52px;
  display: flex;
  flex-direction: column;
  justify-content: space-between;
  border-bottom: 1px solid #5f697a;
  background:
    radial-gradient(ellipse 26px 26px at 802px 30px, rgba(165,190,210,.6), transparent),
    radial-gradient(ellipse 18px 26px at 882px 28px, rgba(190,200,180,.6), transparent),
    radial-gradient(ellipse 16px 16px at 940px 18px, rgba(115,130,190,.7), transparent),
    radial-gradient(ellipse 24px 26px at 958px 32px, rgba(165,185,205,.7), transparent),
    radial-gradient(ellipse 16px 16px at 1016px 18px, rgba(115,130,190,.7), transparent),
    radial-gradient(ellipse 24px 26px at 1032px 32px, rgba(165,185,205,.7), transparent),
    radial-gradient(ellipse 16px 16px at 1094px 18px, rgba(115,130,190,.7), transparent),
    radial-gradient(ellipse 24px 26px at 1108px 32px, rgba(165,185,205,.7), transparent),
    radial-gradient(ellipse 16px 16px at 1246px 16px, rgba(140,185,160,.7), transparent),
    radial-gradient(ellipse 24px 26px at 1258px 32px, rgba(145,165,205,.7), transparent),
    radial-gradient(ellipse 32px 28px at 1332px 30px, rgba(140,175,205,.8), transparent),
    radial-gradient(ellipse 30px 40px at 35px 30px, rgba(110,130,185,.5), transparent),
    linear-gradient(90deg, transparent 94%, rgba(110,95,90,.7)),
    linear-gradient(#6e676b, #8b8e97 35%, #98a4b0 70%, #8e98a4);
}
.title-row { display: flex; justify-content: space-between; align-items: flex-start; height: 19px; }
.menubar {
  display: flex;
  gap: 13px;
  height: 19px;
  padding: 0 6px;
  background: linear-gradient(90deg, #cfcfd4, #d3d3d8);
  border-bottom-right-radius: 4px;
}
.win-buttons { display: flex; gap: 13px; padding-right: 3px; }
.wb { display: flex; align-items: center; justify-content: center; height: 18px; background: linear-gradient(#b3aeb0, #8d8889 45%, #5e5a5b 50%, #8b8788); }
.wb-span { width: 32px; border: 1px solid #ddd; border-top: 0; border-radius: 0 0 5px 5px; outline: 1px solid #444; }
.wb-group { display: flex; border: 1px solid #ddd; border-top: 0; border-radius: 0 0 5px 5px; overflow: hidden; }
.wb-min { width: 28px; border-right: 1px solid #ccc; }
.wb-max { width: 27px; border-right: 1px solid #ccc; }
.wb-close { width: 47px; background: linear-gradient(#dc9c92, #cd5a48 45%, #b02d17 50%, #c9523a); }

.tabs { display: flex; height: 28px; padding-left: 15px; margin-bottom: -1px; }
.pin { width: 34px; display: flex; align-items: center; justify-content: center; border-right: 1px solid #808a97; height: 21px; margin-top: 3px; }
.pin:nth-child(14) { border-color: transparent; }
.tab-active { display: flex; margin-left: -11px; height: 29px; position: relative; }
.tab-mid { display: flex; align-items: center; justify-content: space-between; width: 190px; padding-bottom: 1px; background: #e9f1fb; border-top: 1px solid #566073; white-space: nowrap; }
.tab-new { display: flex; align-items: center; padding: 0 2px; }

.navbar { height: 41px; display: flex; align-items: center; background: linear-gradient(#e9f1fb, #d9e7f6); border-bottom: 1px solid #a3b5c9; }
.back { width: 32px; height: 32px; margin-left: 5px; border: 1px solid #96acc6; border-radius: 50%; background: #eef4fb; display: flex; align-items: center; justify-content: center; position: relative; z-index: 1; }
.urlbox { flex: 1; display: flex; align-items: center; height: 24px; margin-left: -4px; padding-left: 8px; background: #fff; border: 1px solid #a9bdd4; }
.urlbox svg + svg { margin-left: 3px; }
.urlbox svg + .vline { margin-left: 4px; }
.vline { width: 1px; height: 16px; margin: 0 6px 0 5px; background: #c9ced5; }
.url { flex: 1; color: #7b7b7b; }
.url b { font-weight: normal; color: #000; }
.reload { padding: 0 10px 0 4px; }
.searchbox { width: 277px; height: 24px; margin-left: 6px; display: flex; align-items: center; gap: 5px; padding-left: 6px; background: #fff; border: 1px solid #a9bdd4; }
.searchbox input { flex: 1; min-width: 0; border: 0; padding: 0; font-style: italic; background: none; outline: 0; }
.searchbox input::placeholder { color: #777; }
.nav-icons { display: flex; align-items: center; gap: 18px; padding: 0 12px; }
.nav-icons .star { padding-right: 6px; border-right: 1px solid #bcc7d3; margin-right: -11px; }
.abp { display: flex; align-items: center; gap: 6px; margin-right: -4px; }
.abp span { width: 17px; height: 16px; border-radius: 5px; background: #d0140f; color: #fff; font: bold 8px/16px "Liberation Sans", Arial, sans-serif; }
.vline.tall { height: 38px; margin: 0 -7px; }

/* ---- router page ---- */
.app {
  flex: 1;
  position: relative;
  display: flex;
  flex-direction: column;
  background:
    linear-gradient(rgba(52,70,107,0) 50px, #34466b 165px),
    linear-gradient(90deg, #34466b, #3a5c87 6%, #557699 16%, #7a90ac 31%, #6683a5 37%, #3d6393 44%, #34466b 54%);
}
.app-head { height: 50px; display: flex; padding: 0 10px 0 18px; }
.logo { font: italic bold 29px/48px "DejaVu Sans", sans-serif; color: #f4f4f4; }
.model { margin-left: 11px; font: bold 18px/50px "DejaVu Sans", sans-serif; color: #9fd3e8; }
.links { margin-left: auto; display: flex; gap: 7px; height: 18px; align-items: center; color: #c8ced8; }
.links span { margin-right: 12px; }
.links a { display: flex; align-items: center; gap: 2px; }
.links .logout { display: inline; color: #6fa6e0; text-decoration: underline; }
.links .gap { margin-right: 2px; }
.links .tight { gap: 0; }

.app-main { flex: 1; display: flex; padding: 0 5px 6px 3px; }
.rail { width: 33px; padding-top: 3px; display: flex; flex-direction: column; gap: 1px; }
.rail-item { height: 37px; display: flex; align-items: center; justify-content: center; background: #3b4d73; border: 1px solid #465a82; border-right: 0; border-radius: 5px 0 0 5px; }
.rail-item.on { background: linear-gradient(#28436c, #6589bb); border-color: #9dbce0; }

.sidebar { width: 180px; background: linear-gradient(#2d4d80, #3c62a0 24px); border: 1px solid #7296c4; border-bottom: 0; font: 11px/18px "Liberation Sans", Arial, sans-serif; color: #dfe4ea; }
.sidebar h1 { margin: 0; padding-left: 5px; font: bold 13px/30px "DejaVu Sans Condensed", Tahoma, sans-serif; color: #fff; }
.quick { display: flex; justify-content: flex-end; align-items: center; gap: 5px; height: 22px; padding-right: 10px; font: 11px/22px "DejaVu Sans Condensed", Tahoma, sans-serif; }
.tree { list-style: none; margin: 0; padding: 0 0 0 10px; }
.tree li { display: flex; align-items: center; height: 18px; }
.tree svg { width: 10px; height: 10px; margin-right: 3px; }
.tree a { padding: 0 3px; line-height: 16px; }
.tree .leaf svg, .tree .sub svg { width: 5px; height: 5px; margin: 0 5px 0 3px; }
.tree .sub { padding-left: 16px; }
.tree .current { background: #d5dce5; color: #3c62a0; }

.splitter { width: 5px; display: flex; align-items: center; }
.content { flex: 1; min-width: 0; display: flex; flex-direction: column; }
.page-tab { align-self: flex-start; width: 50px; height: 24px; margin-left: 2px; border: 1px solid #b5d0f0; border-bottom: 0; border-radius: 3px 3px 0 0; background: linear-gradient(#fff 6px, #bdd2ee 7px, #dfe9f6); font-weight: bold; line-height: 26px; text-align: center; color: #1c3e78; }
.panel { flex: 1; padding: 16px 10px 0; background: #fff; border: 1px solid #82a8dc; border-top: 4px solid #b5cdec; }
.block { margin-bottom: 16px; }
.block h2 { margin: 0; padding: 2px 0 0 6px; font-size: 11px; line-height: 18px; color: #1f4d9a; border-bottom: 5px solid #dae1ee; }
.grid { margin: 5px 25px 0 15px; border: 1px solid #c4c1b4; }
.toolbar { display: flex; gap: 10px; height: 25px; padding-left: 6px; background: linear-gradient(#fff, #f3f2f0); }
.toolbar button { display: flex; align-items: center; gap: 5px; }
.toolbar svg { width: 14px; height: 14px; }
.toolbar .mv { width: 16px; }
.toolbar button:disabled { color: #a5a5a5; }
.toolbar button:disabled svg { opacity: .6; }

table { width: 100%; table-layout: fixed; border-collapse: collapse; font: 11px/14px "Liberation Sans", Arial, sans-serif; }
th { height: 25px; padding: 0 5px; text-align: left; font-weight: normal; background: linear-gradient(#e1e7ef 45%, #cfd4db 46%, #dfe6ee); border-top: 1px solid #c4c1b4; border-bottom: 1px solid #c4c1b4; border-right: 1px solid #9fb0c6; }
th:last-child { border-right: 0; }
th.sorted { text-align: center; background: linear-gradient(#73a9f0, #73a9f0) bottom / 100% 3px no-repeat, linear-gradient(#eaf2ff 45%, #cddcf5 46%, #e0ebfc); }
th i { display: inline-block; border: 4px solid transparent; border-top: 0; border-bottom-color: #5681c4; margin-bottom: 1px; }
td { height: 21px; padding: 0 6px; }
td.num { padding-left: 8px; text-align: center; }
tr.alt td { background: #fafbfd; }
tr.selected td { background: #507dcd; border-top: 1px dotted #a9c3f5; border-bottom: 1px dotted #a9c3f5; }
tr td.blank { background: #fff; border: 0; }
.w-num-s { width: 36px; }
.w-num-m { width: 50px; }
.w-num-l { width: 82px; }
.w-end { width: 21px; }
.w-fqdn { width: 624px; }
.w-zone { width: 163px; }
.w-type { width: 727px; }
.w-name { width: 375px; }
.w-svc { width: 227px; }
.w-addr { width: 506px; }

.pager { display: flex; align-items: center; height: 26px; margin-top: -1px; padding: 0 9px 0 8px; background: linear-gradient(#fff, #f3f2f0); border-top: 1px solid #c4c1b4; }
.pager .sep { width: 1px; height: 14px; background: #c0c0c0; margin-right: 5px; }
.pager button { opacity: .8; }
.p-first { width: 22px; }
.p-prev { width: 19px; }
.p-next { width: 20px; margin-left: 7px; }
.p-last { width: 20px; }
.pager label { display: flex; align-items: center; gap: 5px; }
.pager input { width: 24px; height: 19px; padding: 0 2px; border: 1px solid #ccd; background: #fff; }
.pager .of { margin: 0 5px; }
.pager .combo { margin: 0 1px 0 2px; }
.total { margin-left: auto; color: #444; }

.combo { display: inline-flex; width: 90px; height: 22px; border: 1px solid #b5b8c8; background: linear-gradient(#eee, #fff 4px); }
.combo select { appearance: none; flex: 1; min-width: 0; border: 0; padding: 2px 0 0 3px; background: none; color: #000; opacity: 1; }
.combo .arrow { width: 17px; display: flex; align-items: center; justify-content: center; border-left: 1px solid #b5b8c8; background: linear-gradient(#fff, #d4d8de); }
.combo.small { width: 50px; height: 20px; }
.combo.off { opacity: .4; }
.combo.off select { color: #888; }

.mask { position: absolute; inset: 0; background: rgba(0,0,0,.4); }

/* ---- edit window ---- */
.dialog { position: absolute; left: 718px; top: 175px; width: 479px; padding: 0 5px; border: 1px solid #6d8fbd; border-radius: 3px 3px 0 0; background: #c7d6e8; box-shadow: inset 0 0 0 1px #e8f0fa, 0 2px 5px rgba(0,0,0,.5); }
.dlg-head { display: flex; align-items: center; gap: 3px; height: 23px; margin: 0 -4px; padding: 0 5px; background: linear-gradient(#d3e0ef 35%, #bdcfe5 36%, #c7d6e8); }
.dlg-head h3 { flex: 1; margin: 0 0 0 2px; font-size: 11px; line-height: 22px; color: #1a459b; }
.dlg-tool { width: 15px; height: 15px; display: flex; align-items: center; justify-content: center; border: 1px solid #87abdb; border-radius: 3px; background: #f0f6fd; color: #3565ac; font-weight: bold; }
.dlg-body { display: flex; height: 263px; padding-right: 1px; background: #fff; border: 1px solid #a3bad9; border-right-color: #dce7f4; border-bottom-color: #e8eff8; }
.form { flex: 1; padding: 19px 0 0 27px; }
.row { display: flex; align-items: center; height: 26px; }
.row > :first-child { width: 208px; }
.row.first { height: 24px; }
.row.short { height: 22px; }
.row.isp { height: 25px; }
.row.mid > :first-child { padding-left: 20px; width: 209px; }
.row.first > :first-child { width: 209px; }
.row.deep > :first-child { padding-left: 35px; }
.row.radio label { display: flex; align-items: center; gap: 7px; margin-left: -2px; width: 210px; }
.row .val { padding: 5px 0 0 3px; color: #2c56a0; }
.text { width: 125px; height: 22px; padding: 0 3px; border: 1px solid #b5b8c8; background: linear-gradient(#eee, #fff 4px); }
.text.wide { width: 127px; }
.text:disabled { border-color: #d0d2dc; background: linear-gradient(#f6f6f6, #fff 4px); }
.row input[type=radio] { appearance: none; width: 12px; height: 12px; border: 1px solid #8e8f8f; border-radius: 50%; background: radial-gradient(#d5d5d5, #f4f4f4); }
.row input[type=radio]:checked { background: radial-gradient(circle, #2b9bd0 1px, #1c3f5c 3px, #e9e9e9 4px); }
.scroll { width: 15px; display: flex; flex-direction: column; align-items: center; padding: 7px 0 5px; background: #f1f1f1; }
.thumb { flex: 1; width: 15px; margin: 7px 0 13px; display: flex; flex-direction: column; align-items: center; justify-content: center; gap: 1px; border: 1px solid #979797; border-radius: 2px; background: linear-gradient(90deg, #f5f5f5, #e2e2e5 50%, #c4c4c8); }
.thumb i { width: 7px; height: 2px; background: #666; border-bottom: 1px solid #fff; }
.dlg-foot { display: flex; justify-content: flex-end; gap: 6px; height: 41px; padding: 8px 7px 0 0; }
.dlg-foot button { width: 75px; height: 21px; border: 1px solid #1c4a84; border-radius: 3px; background: linear-gradient(#fff, #f0f0f3 50%, #dcdde3 55%, #ededf0); box-shadow: inset 0 0 0 1px #fff; }

.status { position: absolute; left: 0; bottom: 0; height: 21px; padding: 1px 9px 0 4px; line-height: 18px; background: linear-gradient(#fff, #e4e5ea); border: 1px solid #9a9a9a; border-left: 0; color: #333; }

/* ---- taskbar ---- */
.taskbar {
  height: 39px;
  display: flex;
  align-items: center;
  border-top: 1px solid #8d8785;
  background:
    radial-gradient(ellipse 130px 34px at 210px 36px, #7d7064, transparent),
    radial-gradient(ellipse 130px 24px at 640px 38px, #85796c, transparent),
    radial-gradient(ellipse 130px 30px at 920px 16px, #8f8172, transparent),
    radial-gradient(ellipse 60px 24px at 1000px 34px, #7d7064, transparent),
    linear-gradient(90deg, #201a1c, #3b3133 25%, #40363a 50%, #4a3f44 66%, #1d191b 80%, #33211f 92%, #241c1e);
  color: #fff;
  font: 11px/17px "Open Sans", "Noto Sans", sans-serif;
}
.start { width: 54px; display: flex; justify-content: center; margin-right: 6px; }
.task { width: 58px; height: 38px; margin-right: 4px; display: flex; align-items: center; justify-content: center; border: 1px solid transparent; border-radius: 3px; }
.task.open { background: linear-gradient(135deg, rgba(255,255,255,.4), rgba(255,255,255,.15) 50%, rgba(255,255,255,.25)); border-color: rgba(255,255,255,.5); }
.task.focus { background: linear-gradient(135deg, rgba(255,255,255,.7), rgba(255,255,255,.4) 50%, rgba(255,255,255,.6)); border-color: #eee; }
.task.stack { width: 54px; box-shadow: 4px 0 0 -1px #5b5350, 5px 0 0 -1px #b5aca5; }
.tray { margin-left: auto; display: flex; align-items: center; gap: 8px; height: 38px; }
.tray .lang { margin: 0 8px 4px 0; }
.clock { display: flex; flex-direction: column; align-items: center; width: 72px; margin-left: 1px; }
.show-desktop { width: 14px; height: 38px; margin-left: -5px; border: 1px solid #8d8785; background: linear-gradient(135deg, #625c5b, #2a2526 60%, #3d3839); }
```
